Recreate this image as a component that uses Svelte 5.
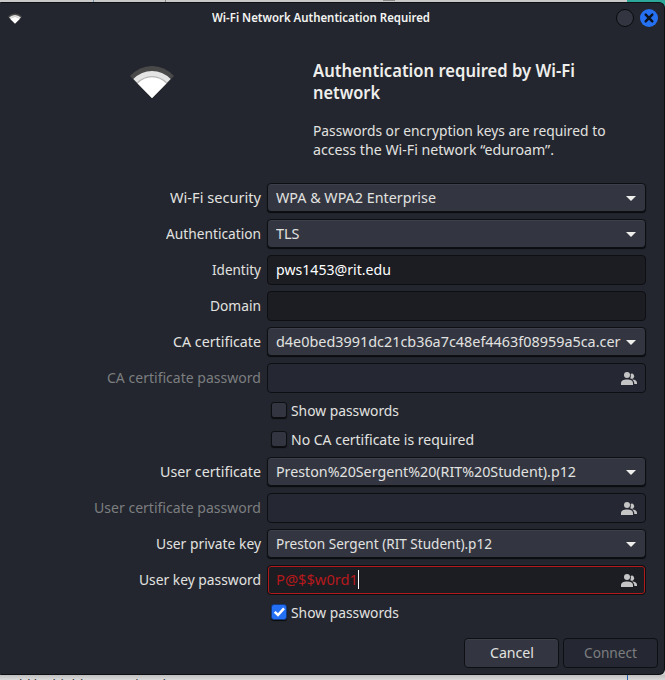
<script>
  let identity = 'pws1453@rit.edu';

  const rows = [
    { label: 'Wi-Fi security', lw: 91, kind: 'combo', value: 'WPA & WPA2 Enterprise', vw: 160 },
    { label: 'Authentication', lw: 95, kind: 'combo', value: 'TLS', vw: 23.5 },
    { label: 'Identity', lw: 49, kind: 'entry', value: identity, vw: 115 },
    { label: 'Domain', lw: 51, kind: 'entry', value: '' },
    { label: 'CA certificate', lw: 88, kind: 'combo', value: 'd4e0bed3991dc21cb36a7c48ef4463f08959a5ca.cer', vw: 344.5 },
    { label: 'CA certificate password', lw: 154, kind: 'entry disabled', value: '', people: true },
    { kind: 'check', value: 'Show passwords', vw: 108 },
    { kind: 'check', value: 'No CA certificate is required', vw: 183 },
    { label: 'User certificate', lw: 101, kind: 'combo', value: 'Preston%20Sergent%20(RIT%20Student).p12', vw: 300 },
    { label: 'User certificate password', lw: 167, kind: 'entry disabled', value: '', people: true },
    { label: 'User private key', lw: 105, kind: 'combo', value: 'Preston Sergent (RIT Student).p12', vw: 216 },
    { label: 'User key password', lw: 122, kind: 'entry error', value: 'P@$$w0rd1', vw: 82, people: true, caret: true },
    { kind: 'check', value: 'Show passwords', vw: 108, checked: true }
  ];

  // Condenses a line of text so that it takes the given width.
  function fit(node, width) {
    if (!width) return;
    const natural = node.getBoundingClientRect().width;
    node.style.width = `${width}px`;
    node.style.transform = `scaleX(${width / natural})`;
  }
</script>

{#snippet wifi(w, h)}
  <svg width={w} height={h} viewBox="0 0 44 32" aria-hidden="true">
    <path d="M0 10Q9.500 0 22 0T44 10L22 32Z" fill="#494949" />
    <path d="M3.300 13Q11.500 5 22 5T40.700 13L22 32Z" fill="#e4e4e4" />
    <path d="M7 16.500Q13.500 10 22 10T37 16.500L22 32Z" fill="#b5b5b5" />
    <path d="M7.700 17.400Q14 11.200 22 11.200T36.300 17.400L22 32Z" fill="#fff" />
  </svg>
{/snippet}

<div class="desktop">
  <div class="backdrop top"><i></i><b></b><em></em></div>
  <div class="window">
    <header>
      <span class="mini">{@render wifi(14, 11)}</span>
      <span class="title"><span class="t" use:fit={218}>Wi-Fi Network Authentication Required</span></span>
      <span class="controls">
        <span class="dot"></span>
        <svg width="18" height="18" viewBox="0 0 18 18" aria-hidden="true">
          <circle cx="9" cy="9" r="9" fill="#2670f2" />
          <path d="M5.700 5.700L12.300 12.300M12.300 5.700L5.700 12.300" stroke="#0b1220" stroke-width="2.500" stroke-linecap="round" />
        </svg>
      </span>
    </header>

    <section class="intro">
      <div class="logo">{@render wifi(44, 32)}</div>
      <div class="copy">
        <h1><span class="t" use:fit={262}>Authentication required by Wi-Fi</span><br /><span class="t" use:fit={67}>network</span></h1>
        <p><span class="t" use:fit={292.500}>Passwords or encryption keys are required to</span><br /><span class="t" use:fit={241}>access the Wi-Fi network “eduroam”.</span></p>
      </div>
    </section>

    <form>
      {#each rows as row}
        <div class="row {row.kind}">
          <div class="label">{#if row.label}<span class="t" use:fit={row.lw}>{row.label}</span>{/if}</div>
          {#if row.kind === 'check'}
            <div class="option">
              <span class="box" class:checked={row.checked}>
                {#if row.checked}
                  <svg width="14" height="14" viewBox="0 0 14 14" aria-hidden="true"><path d="M2.700 6.800L6 10L12 3.300" fill="none" stroke="#fff" stroke-width="2.500" /></svg>
                {/if}
              </span>
              <span class="t" use:fit={row.vw}>{row.value}</span>
            </div>
          {:else}
            <div class="field">
              <span class="value"><span class="t" use:fit={row.vw}>{row.value}</span>{#if row.caret}<span class="caret"></span>{/if}</span>
              {#if row.kind === 'combo'}
                <svg class="arrow" width="10" height="5" viewBox="0 0 10 5" aria-hidden="true"><path d="M0 0H10L5 5Z" fill="#eeeeec" /></svg>
              {/if}
              {#if row.people}
                <svg class="people" width="16" height="13" viewBox="0 0 16 13" fill="#c5c5c5" aria-hidden="true">
                  <circle cx="6" cy="3" r="3" />
                  <path d="M0 13V11.200C0 8.600 2.500 7.500 6 7.500S12 8.600 12 11.200V13Z" />
                  <path d="M9.600 1.900A2.500 2.500 0 1 1 9.300 6.200Q10.400 4.300 9.600 1.900Z" />
                  <path d="M11 7.500C14.400 7.600 16 8.800 16 11V12H13.300C13.300 10 12.700 8.700 11 7.500Z" />
                </svg>
              {/if}
            </div>
          {/if}
        </div>
      {/each}
    </form>

    <footer>
      <button class="cancel"><span class="t" use:fit={44}>Cancel</span></button>
      <button class="connect" disabled><span class="t" use:fit={53}>Connect</span></button>
    </footer>
  </div>
  <div class="backdrop bottom"><span>uld be highly appreciated</span></div>
</div>

<style>
  :global(body) { background: #c9c9c9; overflow: hidden; }
  * { box-sizing: border-box; }
  .desktop {
    width: 665px; height: 680px; display: flex; flex-direction: column; overflow: hidden;
    background: linear-gradient(90deg, #c9c9c9 0 627px, #2ba89a 627px) 0 0 / 100% 12px no-repeat, #d0d0d0;
    font: 14.667px/20px "Noto Sans", "Open Sans", sans-serif; color: #e2e2e0;
  }
  .t { display: inline-block; white-space: pre; transform-origin: 0 50%; text-align: left; }
  .backdrop.top { height: 2px; flex: none; display: flex; }
  .backdrop i { margin-left: 93px; width: 1px; background: #7890a5; }
  .backdrop b { margin-left: 71px; width: 1px; background: #888; }
  .backdrop em { margin-left: 217px; width: 12px; height: 1px; background: #888; box-shadow: 22px 0 #c9c9c9; }
  .backdrop.bottom { height: 5px; flex: none; overflow: hidden; background: linear-gradient(90deg, transparent 627px, #2462b0 627px 628px, transparent 628px), linear-gradient(#bfbfbf, #dadada); color: #333; }
  .backdrop.bottom span { display: block; font-size: 13px; line-height: 18px; margin-left: 11px; }
  .window {
    height: 673px; flex: none; display: flex; flex-direction: column;
    background: #23262e; border: solid #0d0f13; border-width: 1px 1px 1px 0; border-radius: 1px 6px 6px 1px;
  }
  header { height: 30px; flex: none; display: flex; align-items: center; }
  .mini { width: 80px; padding-left: 8px; display: flex; }
  .title { flex: 1; padding-left: 132px; font-size: 12.600px; font-weight: 600; color: #f4f4f2; }
  .controls { display: flex; gap: 6px; padding-right: 6px; }
  .dot { width: 18px; height: 18px; border: 1px solid #090a0d; border-radius: 50%; background: #333641; }
  .intro { display: flex; height: 147px; flex: none; padding-top: 26px; }
  .logo { width: 313px; padding: 7px 0 0 130px; }
  h1 { margin: 0; font-size: 17.600px; line-height: 22px; font-weight: 600; color: #eeeeec; }
  p { margin: 18px 0 0; line-height: 19px; }
  form { margin: 0; padding: 3px 18px 0 0; display: flex; flex-direction: column; gap: 6px; }
  .row { display: flex; height: 30px; align-items: center; }
  .row.check { height: 23px; }
  .label { width: 267px; flex: none; text-align: right; padding: 0 6px 2px 0; }
  .field {
    flex: 1; height: 30px; display: flex; align-items: center; justify-content: space-between;
    padding: 0 8px; border: 1px solid #0d0f13; border-radius: 4px; min-width: 0;
  }
  .value { display: flex; align-items: center; white-space: nowrap; padding-bottom: 2px; }
  .combo .field { height: 29px; margin-bottom: 1px; background: #333641; box-shadow: inset 0 1px #3d404b, 0 1px 1px #090a0d; }
  .combo .value { padding-bottom: 1px; }
  .arrow { margin-right: 1px; margin-top: 1px; }
  .entry .field { background: #1b1d23; }
  .entry:not(.disabled) .field { color: #fff; }
  .disabled .field { background: #252832; }
  .disabled .label { color: #7c7e80; }
  .error .field { height: 30px; background: #1b1d23; box-shadow: inset 0 0 0 1px #b11a1a; }
  .entry.error .field { color: #b5191b; }
  .people { margin-top: 1px; }
  .caret { width: 1px; height: 19px; background: #fff; }
  .option { display: flex; align-items: center; padding-left: 4px; gap: 4px; }
  .option .t { margin-bottom: 2px; }
  .box { width: 16px; height: 16px; margin-top: -1px; border: 1px solid #0d0f13; border-radius: 3px; background: #333641; box-shadow: 0 1px 1px #090a0d; display: flex; }
  .box.checked { background: #2470f5; border-color: #123b86; }
  footer { margin-top: auto; padding: 0 6px 6px; display: flex; justify-content: flex-end; gap: 4px; }
  button { width: 95px; height: 30px; padding: 0 0 2px; border: 1px solid #0d0f13; border-radius: 4px; font: inherit; color: #e2e2e0; background: #333641; box-shadow: inset 0 1px #3d404b; }
  .connect { color: #7c7e80; background: #252832; box-shadow: none; }
</style>
